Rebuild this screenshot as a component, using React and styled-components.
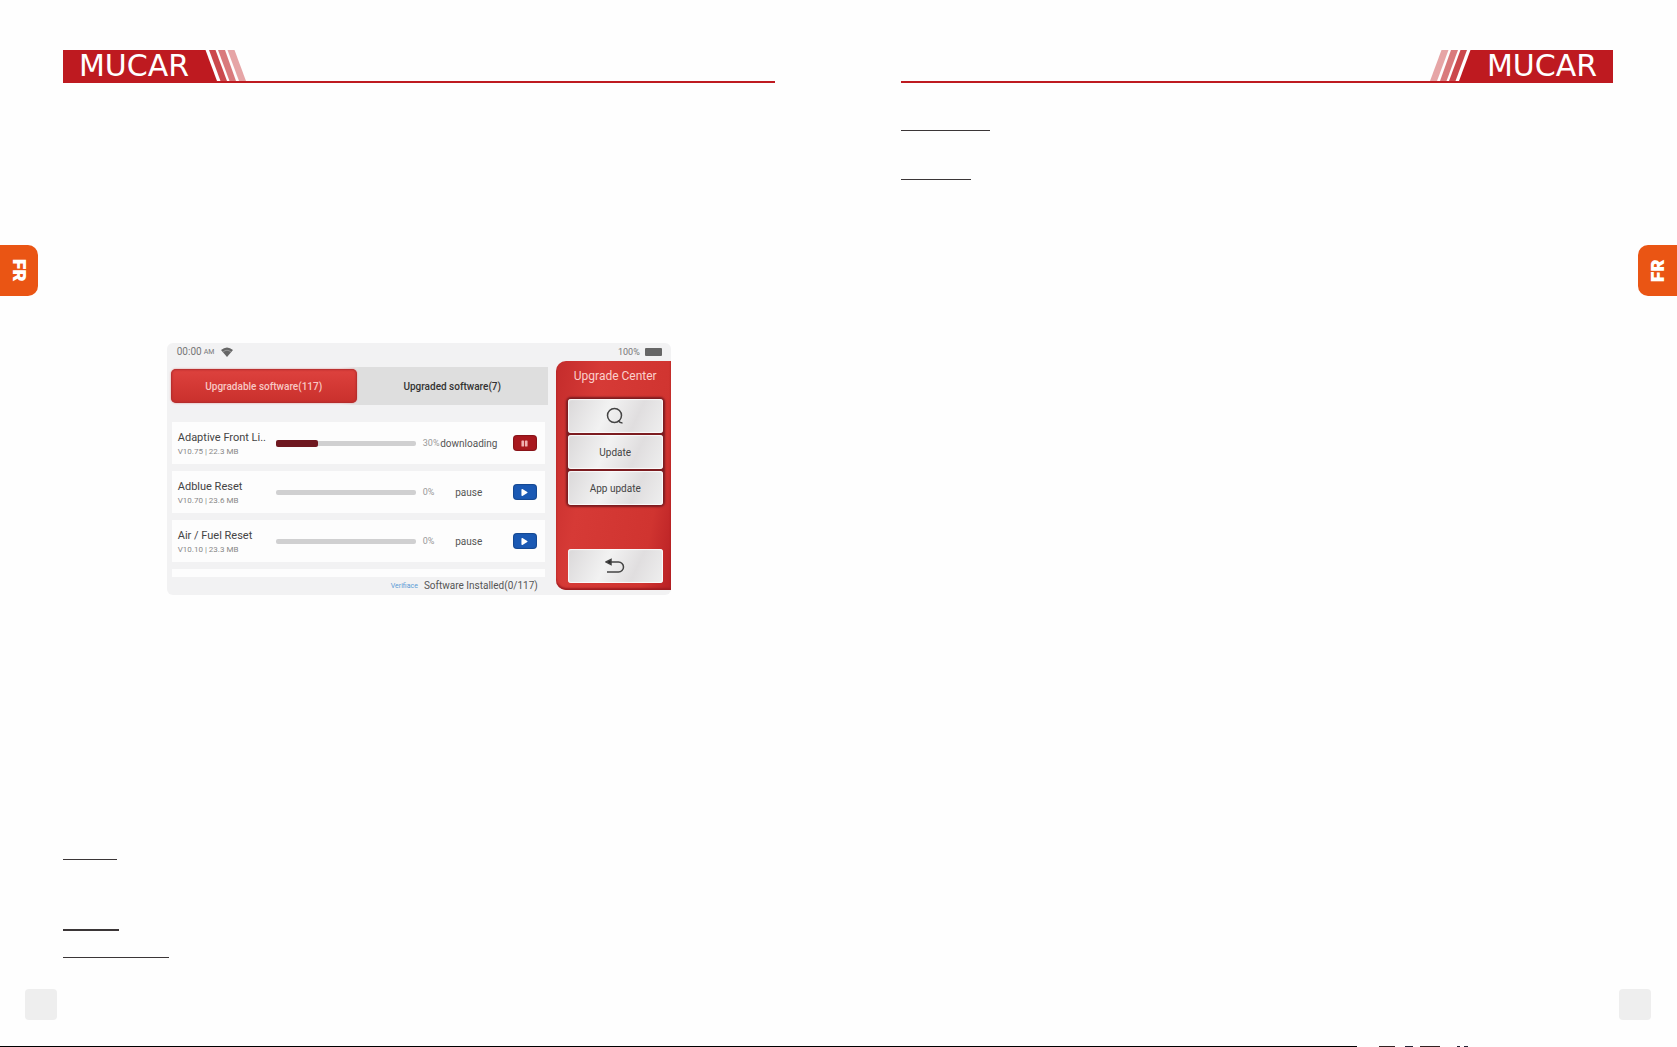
import styled, { createGlobalStyle } from "styled-components";
import { FaPlay, FaPause } from "react-icons/fa";

const software = [
    {
        id: 1,
        name: "Adaptive Front Li..",
        info: "V10.75 | 22.3 MB",
        progress: 30,
        status: "downloading",
    },
    {
        id: 2,
        name: "Adblue Reset",
        info: "V10.70 | 23.6 MB",
        progress: 0,
        status: "pause",
    },
    {
        id: 3,
        name: "Air / Fuel Reset",
        info: "V10.10 | 23.3 MB",
        progress: 0,
        status: "pause",
    },
];

const Header = ({ flip }) => (
    <HeaderBar $flip={flip}>
        <Brand>MUCAR</Brand>
        <Stripes $flip={flip} viewBox="0 0 42 31" aria-hidden="true">
            <path d="M0 0h.5l11.5 31H0z" fill="#be1a20" />
            <path d="M4 0h6.500l11.500 31h-6.500z" fill="#cb484c" />
            <path d="M13 0h7l11 31h-6.500z" fill="#d97a7c" />
            <path d="M22.500 0h7l11.500 31h-7z" fill="#e6a5a6" />
        </Stripes>
    </HeaderBar>
);

const Side = ({ flip }) => (
    <Rail $flip={flip}>
        <LangTab $flip={flip}>FR</LangTab>
        <PageNumber $flip={flip} />
    </Rail>
);

const SoftwareRow = ({ name, info, progress, status }) => {
    const active = status === "downloading";
    return (
        <Row>
            <div>
                <RowName>{name}</RowName>
                <RowInfo>{info}</RowInfo>
            </div>
            <Track>
                <Bar style={{ width: `${progress}%` }} />
            </Track>
            <Percent>{progress}%</Percent>
            <Status>{status}</Status>
            <ToggleButton
                type="button"
                $active={active}
                aria-label={active ? "Pause" : "Resume"}
            >
                {active ? <FaPause /> : <FaPlay />}
            </ToggleButton>
        </Row>
    );
};

const Device = () => (
    <Screen>
        <StatusBar>
            <span>00:00</span>
            <small>AM</small>
            <svg width="12" height="10" viewBox="0 0 12 10" aria-hidden="true">
                <path d="M0 3Q6-2 12 3L6 10z" fill="#666" />
                <path
                    d="M2 5Q6 1.500 10 5"
                    fill="none"
                    stroke="#aaa"
                    strokeWidth=".7"
                />
            </svg>
            <Battery>
                100%
                <i />
            </Battery>
        </StatusBar>
        <ScreenBody>
            <Main>
                <Tabs>
                    <Tab type="button" $active>
                        Upgradable software(117)
                    </Tab>
                    <Tab type="button">Upgraded software(7)</Tab>
                </Tabs>
                <List>
                    {software.map((item) => (
                        <SoftwareRow key={item.id} {...item} />
                    ))}
                    <EmptyRow />
                </List>
                <Summary>
                    <a href="#verify">Verifiace</a>
                    <span>Software Installed(0/117)</span>
                </Summary>
            </Main>
            <Panel>
                <h2>Upgrade Center</h2>
                <ButtonGroup>
                    <PanelButton type="button" aria-label="Search">
                        <svg width="18" height="18" viewBox="0 0 18 18">
                            <circle cx="8.500" cy="8.500" r="7" />
                            <path d="M12 13.500q2 2.500 4.500 2.500" />
                        </svg>
                    </PanelButton>
                    <PanelButton type="button">Update</PanelButton>
                    <PanelButton type="button">App update</PanelButton>
                </ButtonGroup>
                <PanelButton type="button" aria-label="Back">
                    <svg width="20" height="18" viewBox="0 0 20 18">
                        <path d="M3 5h10.500a5 5 0 0 1 0 10H2" />
                        <path d="M1 5l5-2.500v5z" fill="#222" />
                    </svg>
                </PanelButton>
            </Panel>
        </ScreenBody>
    </Screen>
);

const App = () => (
    <>
        <GlobalStyle />
        <Spread>
            <Page>
                <Side />
                <Content>
                    <Header />
                    <Device />
                    <Rule $width={54} $top={264} />
                    <Rule $width={56} $top={69} $thick />
                    <Rule $width={106} $top={26} />
                </Content>
            </Page>
            <Page $flip>
                <Content>
                    <Header flip />
                    <Rule $width={89} $top={47} />
                    <Rule $width={70} $top={48} />
                </Content>
                <Side flip />
            </Page>
        </Spread>
        <BottomLine />
    </>
);

const GlobalStyle = createGlobalStyle`
    * {
        box-sizing: border-box;
    }
    body {
        margin: 0;
        background: #fefefe;
        font-family: Roboto, "Liberation Sans", sans-serif;
    }
    button {
        border: 0;
        padding: 0;
        font: inherit;
        cursor: pointer;
    }
    a {
        text-decoration: none;
    }
`;

const Spread = styled.div`
    display: grid;
    grid-template-columns: 1fr 1fr;
    min-height: calc(100vh - 1px);
`;

const Page = styled.section`
    display: grid;
    grid-template-columns: ${({ $flip }) => ($flip ? "1fr 64px" : "63px 1fr")};
    padding: ${({ $flip }) => ($flip ? "0 0 0 62px" : "0 64px 0 0")};
`;

const Rail = styled.aside`
    display: flex;
    flex-direction: column;
    align-items: ${({ $flip }) => ($flip ? "flex-end" : "flex-start")};
    padding: 245px 0 26px;
`;

const LangTab = styled.div`
    display: flex;
    align-items: center;
    justify-content: center;
    width: ${({ $flip }) => ($flip ? 39 : 38)}px;
    height: 51px;
    border-radius: 0 10px 10px 0;
    background: #ea5514;
    color: #fff;
    font: 900 18px/20px Inter, sans-serif;
    writing-mode: vertical-rl;
    transform: ${({ $flip }) => ($flip ? "rotate(180deg)" : "none")};
`;

const PageNumber = styled.div`
    width: 32px;
    height: 31px;
    margin: ${({ $flip }) => ($flip ? "auto 26px 0 0" : "auto 0 0 25px")};
    border-radius: 4px;
    background: #eee;
`;

const Content = styled.main`
    padding-top: 50px;
`;

const HeaderBar = styled.header`
    display: flex;
    flex-direction: ${({ $flip }) => ($flip ? "row-reverse" : "row")};
    height: 33px;
    border-bottom: 2px solid #be1a20;
`;

const Brand = styled.div`
    width: 142px;
    background: #be1a20;
    color: #fff;
    font: 30px/32px "DejaVu Sans", sans-serif;
    text-align: center;
`;

const Stripes = styled.svg`
    width: 42px;
    height: 31px;
    transform: ${({ $flip }) => ($flip ? "scaleX(-1)" : "none")};
`;

const Rule = styled.hr`
    width: ${({ $width }) => $width}px;
    height: ${({ $thick }) => ($thick ? 2 : 1)}px;
    margin: ${({ $top }) => $top}px 0 0;
    border: 0;
    background: #3b3637;
`;

const Screen = styled.div`
    display: flex;
    flex-direction: column;
    max-width: 504px;
    height: 252px;
    margin: 260px auto 0;
    border-radius: 6px;
    background: #f2f2f3;
    overflow: hidden;
`;

const StatusBar = styled.div`
    display: flex;
    align-items: center;
    height: 18px;
    padding: 0 9px 0 10px;
    color: #777;
    font-size: 10px;
    line-height: 16px;
    small {
        margin-left: 2px;
        font-size: 7px;
    }
    svg {
        margin-left: 7px;
    }
`;

const Battery = styled.div`
    display: flex;
    align-items: center;
    gap: 5px;
    margin-left: auto;
    font-size: 9px;
    i {
        width: 17px;
        height: 8px;
        border-radius: 1px;
        background: #666;
    }
`;

const ScreenBody = styled.div`
    display: grid;
    grid-template-columns: 1fr 115px;
    gap: 8px;
    flex: 1;
`;

const Main = styled.div`
    display: flex;
    flex-direction: column;
    padding: 6px 0 0 4px;
`;

const Tabs = styled.div`
    display: grid;
    grid-template-columns: 186px 1fr;
    height: 38px;
    background: linear-gradient(90deg, #f1f1f2 45%, #dedede 50%);
`;

const Tab = styled.button`
    margin: 2px 0;
    border-radius: 5px;
    background: ${({ $active }) =>
        $active ? "linear-gradient(#de423e, #c9302c)" : "none"};
    box-shadow: ${({ $active }) =>
        $active ? "inset 0 0 2px 1px #b02c2c, 0 0 2px #d88" : "none"};
    color: ${({ $active }) => ($active ? "#f8c8c4" : "#333")};
    font-size: 10px;
    font-weight: 500;
`;

const List = styled.div`
    display: grid;
    gap: 7px;
    margin: 17px 3px 0 1px;
`;

const Row = styled.div`
    display: grid;
    grid-template-columns: 98px 140px 26px 54px 24px;
    align-items: center;
    height: 42px;
    padding-left: 6px;
    background: #fdfdfd;
`;

const EmptyRow = styled.div`
    height: 8px;
    background: #fdfdfd;
`;

const RowName = styled.div`
    padding-top: 2px;
    color: #444;
    font-size: 11px;
    line-height: 14px;
    white-space: nowrap;
`;

const RowInfo = styled.div`
    color: #888;
    font-size: 8px;
    line-height: 13px;
`;

const Track = styled.div`
    display: flex;
    align-items: center;
    height: 5px;
    border-radius: 2px;
    background: #d0d0d1;
`;

const Bar = styled.div`
    height: 7px;
    border-radius: 2px;
    background: #6f1820;
`;

const Percent = styled.span`
    padding-left: 7px;
    color: #999;
    font-size: 9px;
`;

const Status = styled.span`
    display: flex;
    justify-content: center;
    color: #555;
    font-size: 10px;
`;

const ToggleButton = styled.button`
    display: flex;
    align-items: center;
    justify-content: center;
    width: 24px;
    height: 16px;
    margin-left: 17px;
    border-radius: 4px;
    background: ${({ $active }) => ($active ? "#a8181e" : "#1a59b4")};
    box-shadow: inset 0 0 1px 1px rgba(0, 0, 0, 0.2);
    color: ${({ $active }) => ($active ? "#f0b0b0" : "#fff")};
    font-size: 7px;
`;

const Summary = styled.div`
    display: flex;
    align-items: center;
    justify-content: flex-end;
    gap: 6px;
    padding: 2px 10px 0 0;
    color: #555;
    font-size: 10px;
    line-height: 14px;
    a {
        color: #5b9bd5;
        font-size: 7px;
    }
`;

const Panel = styled.div`
    display: flex;
    flex-direction: column;
    height: 229px;
    padding: 6px 8px 7px 12px;
    border-radius: 10px 0 0 10px;
    background: linear-gradient(100deg, #c42c2c, #d63a36 30%, #d03430 80%, #b82024);
    box-shadow: inset 0 -2px 2px #a01c20;
    h2 {
        margin: 0 0 14px;
        color: #fbd0cc;
        font-size: 12px;
        font-weight: 400;
        line-height: 18px;
        text-align: center;
        white-space: nowrap;
    }
`;

const PanelButton = styled.button`
    display: flex;
    align-items: center;
    justify-content: center;
    width: 100%;
    height: 34px;
    border-radius: 3px;
    background: linear-gradient(115deg, #dad8d9, #f2f2f2 40%, #e0dedf 70%, #efefef);
    box-shadow: inset 0 0 1px 1px rgba(255, 255, 255, 0.8);
    color: #444;
    font-size: 10px;
    svg {
        fill: none;
        stroke: #444;
        stroke-width: 1.5;
    }
`;

const ButtonGroup = styled.div`
    display: grid;
    gap: 2px;
    margin-bottom: auto;
    border-radius: 3px;
    background: #7c1c20;
    box-shadow: 0 0 2px 2px #7c1c20;
`;

const BottomLine = styled.div`
    height: 1px;
    background: linear-gradient(
        90deg,
        #000 1357px,
        transparent 1357px 1379px,
        #322 1379px 1395px,
        transparent 1395px 1405px,
        #223 1405px 1413px,
        transparent 1413px 1420px,
        #322 1420px 1440px,
        transparent 1440px 1457px,
        #223 1457px 1460px,
        transparent 1460px 1464px,
        #223 1464px 1468px,
        transparent 1468px
    );
`;

export default App;
